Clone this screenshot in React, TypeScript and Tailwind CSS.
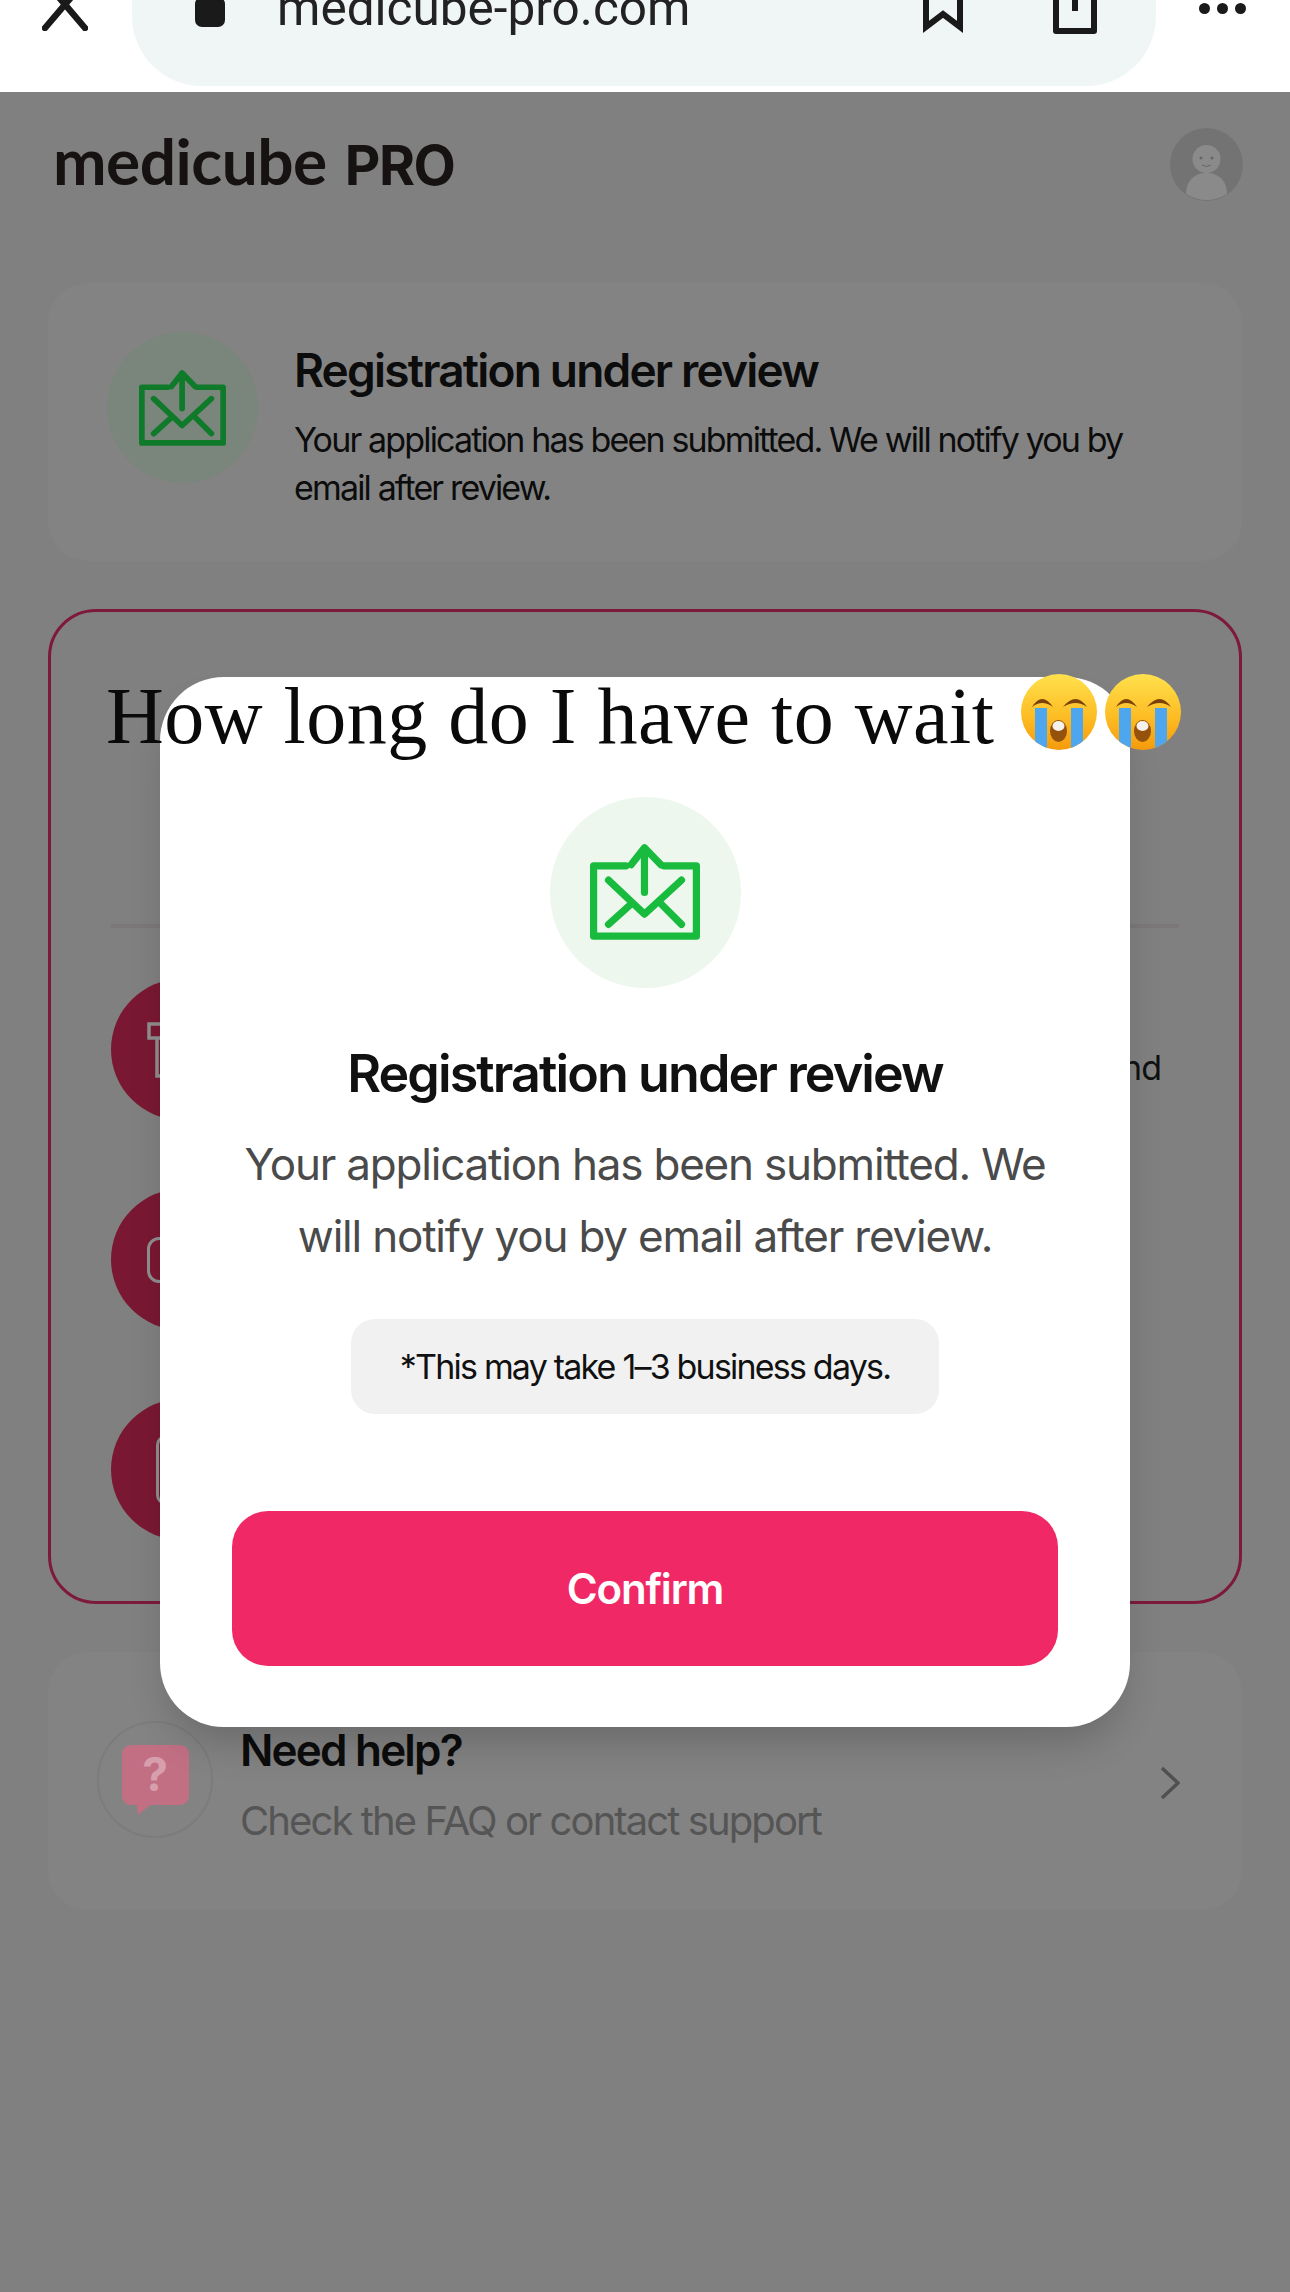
import React from "react";

const inter = "font-['Inter','Liberation_Sans',sans-serif]";

function Envelope({ className, color }: { className: string; color: string }) {
  return (
    <svg viewBox="0 0 107 93" className={className} fill="none" stroke={color} strokeWidth="7" strokeLinecap="round" strokeLinejoin="round">
      <path d="M35 21H3.500V89.500H103.500V21H72" />
      <path d="M40 20L53 3.500L69 20M53 3.500V47" />
      <path d="M18 35L53 68L89 35M18 78L38 60M89 78L69 58" />
    </svg>
  );
}

function CryEmoji({ id }: { id: string }) {
  return (
    <svg viewBox="0 0 76 76" className="w-[76px] h-[76px] shrink-0">
      <defs>
        <linearGradient id={id} x1="0" y1="0" x2="0" y2="1">
          <stop offset="0" stopColor="#ffe14d" />
          <stop offset="0.55" stopColor="#fdbd25" />
          <stop offset="1" stopColor="#f59a0c" />
        </linearGradient>
        <clipPath id={`${id}c`}><circle cx="38" cy="38" r="38" /></clipPath>
      </defs>
      <circle cx="38" cy="38" r="38" fill={`url(#${id})`} />
      <g clipPath={`url(#${id}c)`}>
        <rect x="14" y="34" width="12" height="42" fill="#4ea6ee" />
        <rect x="50" y="34" width="12" height="42" fill="#4ea6ee" />
      </g>
      <path d="M11 33Q21 17 32 33Q21 25 11 33ZM42 33Q55 17 66 33Q55 25 42 33Z" fill="#7a4208" />
      <ellipse cx="37.500" cy="57" rx="8.500" ry="11" fill="#94520c" />
      <ellipse cx="37.500" cy="52" rx="6" ry="5" fill="#f6f1ea" />
    </svg>
  );
}

function Row({ text, icon }: { text?: string; icon: React.ReactNode }) {
  return (
    <div className="flex items-center justify-between">
      <div className="w-[141px] h-[141px] rounded-full bg-[#7a1833] flex items-center justify-center">{icon}</div>
      {text && <span className={`${inter} text-[34px] text-[#111] mr-[18px] mt-[36px] tracking-[-1px]`}>{text}</span>}
    </div>
  );
}

export default function App() {
  return (
    <div className={`relative w-[1290px] h-[2292px] overflow-hidden bg-[#808080] ${inter}`}>
      {/* browser bar */}
      <div className="h-[92px] bg-white overflow-hidden flex items-start pl-[42px] pr-[40px]">
        <svg viewBox="0 0 46 40" className="w-[46px] h-[40px] -mt-[9px] shrink-0" stroke="#1a1a1a" strokeWidth="6.500" strokeLinecap="round">
          <path d="M3 -10L43 37M43 -10L3 37" />
        </svg>
        <div className="ml-[44px] w-[1024px] h-[172px] -mt-[86px] rounded-[70px] bg-[#f0f5f5] flex items-start pl-[63px] pt-[61px] shrink-0">
          <svg viewBox="0 0 30 52" className="w-[30px] h-[52px] shrink-0" fill="none">
            <path d="M8 24V14A7 7 0 0 1 22 14V24" stroke="#1a1a1a" strokeWidth="5" />
            <rect x="0" y="22" width="30" height="30" rx="7" fill="#1a1a1a" />
          </svg>
          <span className="ml-[52px] -mt-[1px] w-[500px] font-['Roboto',sans-serif] text-[49.500px] leading-[68px] text-[#222] whitespace-nowrap">medicube-pro.com</span>
          <svg viewBox="0 0 40 60" className="ml-[146px] w-[40px] h-[60px] mt-[-1px] shrink-0" fill="none" stroke="#1a1a1a" strokeWidth="6">
            <path d="M3 0V53L20 40L37 53V0" />
          </svg>
          <svg viewBox="0 0 44 60" className="ml-[90px] w-[44px] h-[60px] shrink-0" fill="none" stroke="#1a1a1a" strokeWidth="6" strokeLinejoin="round">
            <path d="M3 20V56H41V20M22 0V36" />
          </svg>
        </div>
        <div className="ml-[43px] flex gap-[7px] pt-[3px]">
          <div className="w-[11px] h-[11px] rounded-full bg-[#1a1a1a]" />
          <div className="w-[11px] h-[11px] rounded-full bg-[#1a1a1a]" />
          <div className="w-[11px] h-[11px] rounded-full bg-[#1a1a1a]" />
        </div>
      </div>

      {/* header */}
      <div className="flex items-start justify-between pl-[53px] pr-[47px] pt-[36px] h-[191px]">
        <div className="flex items-baseline gap-[18px] text-[#171212] leading-[70px] mt-[-2px]">
          <span className="font-['Lato',sans-serif] font-bold text-[64px] tracking-[-0.5px]">medicube</span>
          <span className="font-bold text-[55px] tracking-[-1.500px]">PRO</span>
        </div>
        <svg viewBox="0 0 73 73" className="w-[73px] h-[73px] shrink-0">
          <circle cx="36.500" cy="36.500" r="36.500" fill="#737373" />
          <circle cx="36.500" cy="31" r="14" fill="#8a8a8a" />
          <path d="M16 66C16 52 25 45 36.500 45S57 52 57 66Q36.500 78 16 66Z" fill="#8a8a8a" />
          <circle cx="31" cy="30" r="1.500" fill="#666" />
          <circle cx="42" cy="30" r="1.500" fill="#666" />
          <path d="M32 37Q36.500 40 41 37" stroke="#666" fill="none" />
        </svg>
      </div>

      <div className="mx-[48px] flex flex-col">
        {/* status card */}
        <div className="h-[278px] rounded-[40px] bg-[#838383] flex pl-[59px] pr-[20px] pt-[49px] gap-[36px]">
          <div className="w-[151px] h-[151px] rounded-full bg-[#7a857c] flex items-center justify-center shrink-0">
            <Envelope className="w-[87px] h-[76px]" color="#107a2b" />
          </div>
          <div className="pt-[11px]">
            <div className="text-[46px] leading-[54px] font-semibold text-[#0c0c0c] tracking-[-1.800px] whitespace-nowrap">Registration under review</div>
            <div className="mt-[19px] text-[34px] leading-[48px] text-[#0c0c0c] tracking-[-1.850px] w-[860px]">Your application has been submitted. We will notify you by email after review.</div>
          </div>
        </div>

        {/* steps card */}
        <div className="mt-[48px] h-[995px] rounded-[48px] border-[3px] border-[#7d1a3a] pl-[60px] pr-[60px] pt-[312px]">
          <div className="h-[4px] bg-[#7c7779]" />
          <div className="mt-[51px] flex flex-col gap-[69px]">
            <Row text="and" icon={
              <svg viewBox="0 0 60 56" className="w-[60px] h-[56px] mr-[10px]" fill="none" stroke="#8f8f8f" strokeWidth="3.500">
                <path d="M2 2H58V16H2ZM10 16V54H50V16" />
              </svg>
            } />
            <Row icon={<div className="w-[60px] h-[46px] border-[3px] border-[#8f8f8f] rounded-[12px] mr-[10px]" />} />
            <Row icon={<div className="w-[52px] h-[70px] border-[3px] border-[#8f8f8f] rounded-[10px]" />} />
          </div>
        </div>

        {/* help card */}
        <div className="mt-[48px] h-[258px] rounded-[40px] bg-[#838383] flex items-start pl-[49px] pr-[62px] pt-[70px]">
          <div className="w-[116px] h-[117px] rounded-full border-[2px] border-[#7c7c7c] flex items-center justify-center shrink-0 -mt-[1px]">
            <svg viewBox="0 0 67 70" className="w-[67px] h-[70px]">
              <path d="M10 0H57Q67 0 67 10V50Q67 60 57 60H28L16 70L15 60H10Q0 60 0 50V10Q0 0 10 0Z" fill="#c26f84" />
              <text x="33" y="46" textAnchor="middle" fontSize="46" fontWeight="700" fill="#d79fac" fontFamily="Inter">?</text>
            </svg>
          </div>
          <div className="ml-[27px] flex-1">
            <div className="text-[44px] leading-[52px] font-semibold text-[#0c0c0c] tracking-[-1.800px] mt-[2px]">Need help?</div>
            <div className="mt-[20px] text-[40px] leading-[50px] text-[#555] tracking-[-1.900px]">Check the FAQ or contact support</div>
          </div>
          <svg viewBox="0 0 20 34" className="w-[20px] h-[34px] mt-[44px]" fill="none" stroke="#505050" strokeWidth="3.500">
            <path d="M2 2L18 17L2 32" />
          </svg>
        </div>
      </div>

      {/* modal */}
      <div className="absolute left-[160px] top-[677px] w-[970px] h-[1050px] rounded-[64px] bg-white shadow-[0_24px_40px_-10px_rgba(0,0,0,0.2)] flex flex-col items-center pt-[120px]">
        <div className="w-[191px] h-[191px] rounded-full bg-[#edf7ee] flex items-center justify-center">
          <Envelope className="w-[110px] h-[96px] -mt-[2px]" color="#18bb3d" />
        </div>
        <div className="mt-[56px] text-[52px] leading-[60px] font-semibold text-[#111] tracking-[-1.900px] whitespace-nowrap">Registration under review</div>
        <div className="mt-[24px] text-[44px] leading-[72px] text-[#4a4a4a] tracking-[-1.200px] text-center w-[830px]">Your application has been submitted. We will notify you by email after review.</div>
        <div className="mt-[47px] w-[588px] h-[95px] rounded-[24px] bg-[#f1f1f1] flex items-center justify-center text-[34px] text-[#111] tracking-[-1.800px] whitespace-nowrap">*This may take 1–3 business days.</div>
        <div className="mt-[97px] w-[826px] h-[155px] rounded-[36px] bg-[#f02865] flex items-center justify-center text-[42px] font-semibold text-white tracking-[-1.200px]">Confirm</div>
      </div>

      {/* story caption over everything */}
      <div className="absolute left-[106px] top-[671px] flex items-start">
        <span className="font-['Liberation_Serif',serif] text-[80px] leading-[90px] text-[#0a0a0a] whitespace-nowrap w-[915px] tracking-[0.5px]">How long do I have to wait</span>
        <div className="flex gap-[8px] mt-[3px]">
          <CryEmoji id="e1" />
          <CryEmoji id="e2" />
        </div>
      </div>
    </div>
  );
}
